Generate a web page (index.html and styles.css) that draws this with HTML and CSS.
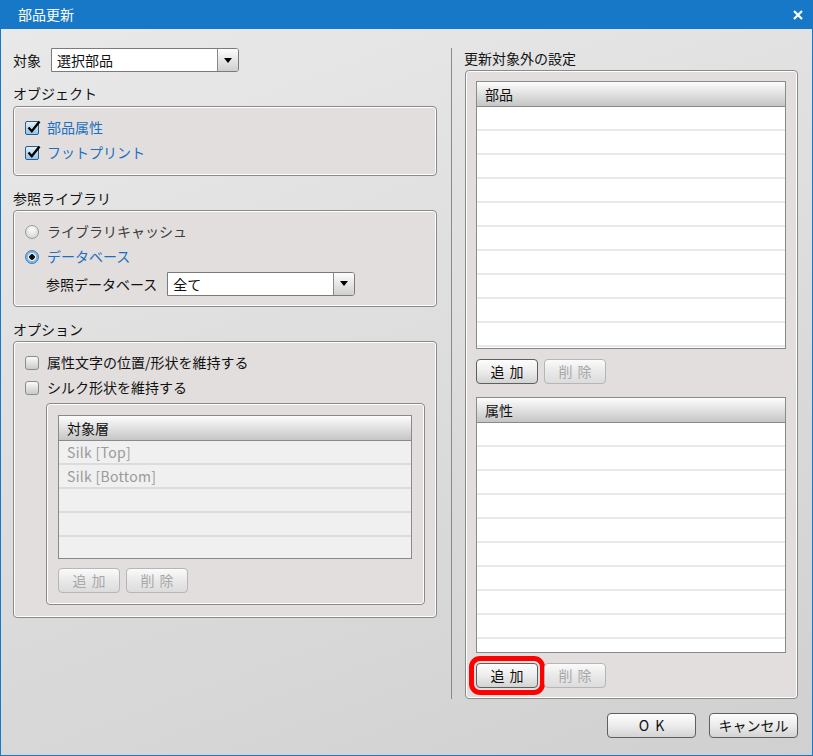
FILE: index.html
```html
<!DOCTYPE html>
<html lang="ja">
<head>
	<meta charset="UTF-8">
	<title>部品更新</title>
	<link rel="stylesheet" href="styles.css">
</head>
<body>
	<div class="window">
		<!-- タイトルバー -->
		<div class="titlebar">
			<span class="title">部品更新</span>
			<svg class="close" viewBox="0 0 10 10"><path d="M1 1L9 9M9 1L1 9" stroke="#fff" stroke-width="2.2" fill="none"/></svg>
		</div>
		<div class="frame">
			<div class="main">
				<!-- 左側 -->
				<div class="left">
					<div class="target-row">
						<span>対象</span>
						<div class="select"><span class="value">選択部品</span><span class="arrow"></span></div>
					</div>

					<div class="section-label first">オブジェクト</div>
					<div class="group">
						<div class="row">
							<span class="check on"><svg viewBox="0 0 14 14"><path d="M2.5 6.5L5.8 10.2L13.5 0.5" stroke="#000" stroke-width="2.4" fill="none"/></svg></span>
							<span class="blue">部品属性</span>
						</div>
						<div class="row">
							<span class="check on"><svg viewBox="0 0 14 14"><path d="M2.5 6.5L5.8 10.2L13.5 0.5" stroke="#000" stroke-width="2.4" fill="none"/></svg></span>
							<span class="blue">フットプリント</span>
						</div>
					</div>

					<div class="section-label">参照ライブラリ</div>
					<div class="group">
						<div class="row">
							<span class="radio"></span>
							<span class="dim">ライブラリキャッシュ</span>
						</div>
						<div class="row">
							<span class="radio on"></span>
							<span class="blue">データベース</span>
						</div>
						<div class="db-row">
							<span>参照データベース</span>
							<div class="select"><span class="value">全て</span><span class="arrow"></span></div>
						</div>
					</div>

					<div class="section-label">オプション</div>
					<div class="group options">
						<div class="row">
							<span class="check"></span>
							<span>属性文字の位置/形状を維持する</span>
						</div>
						<div class="row">
							<span class="check"></span>
							<span>シルク形状を維持する</span>
						</div>
						<div class="subgroup">
							<div class="table gray layers">
								<div class="head">対象層</div>
								<div class="body">
									<div class="cell">Silk [Top]</div>
									<div class="cell">Silk [Bottom]</div>
								</div>
							</div>
							<div class="btns">
								<div class="btn off">追加</div>
								<div class="btn off">削除</div>
							</div>
						</div>
					</div>
				</div>

				<div class="divider"></div>

				<!-- 右側 -->
				<div class="right">
					<div class="section-label side-label">更新対象外の設定</div>
					<div class="group side">
						<div class="table parts">
							<div class="head">部品</div>
							<div class="body"></div>
						</div>
						<div class="btns">
							<div class="btn">追加</div>
							<div class="btn off">削除</div>
						</div>
						<div class="table attrs">
							<div class="head">属性</div>
							<div class="body"></div>
						</div>
						<div class="btns">
							<div class="btn marked">追加</div>
							<div class="btn off">削除</div>
						</div>
					</div>
				</div>
			</div>

			<div class="footer">
				<div class="btn wide ok">OK</div>
				<div class="btn wide">キャンセル</div>
			</div>
		</div>
	</div>
</body>
</html>
```

FILE: styles.css
```css
*{margin:0;padding:0;box-sizing:border-box;}
body{width:813px;height:756px;font-family:"Noto Sans CJK JP","Noto Sans",sans-serif;font-size:14px;color:#111;background:#fff;}
.window{width:813px;height:756px;display:flex;flex-direction:column;}

/* タイトルバー */
.titlebar{height:29px;flex:none;background:#1878c8;color:#fff;display:flex;align-items:center;justify-content:space-between;padding:0 10px 0 18px;}
.titlebar .title{line-height:29px;}
.close{width:10px;height:10px;}

.frame{flex:1;border:1px solid #1878c8;border-top:none;background:linear-gradient(160deg,#e9e9e9,#d0d0d0);padding:19px 14px 0 12px;display:flex;flex-direction:column;}
.main{display:flex;}
.left{width:424px;}
.divider{width:1px;background:#8a8a8a;margin:0 12px 0 14px;}
.right{flex:1;}

.section-label{height:20px;line-height:20px;margin:12px 0 2px;}
.section-label.first{margin-top:11px;margin-bottom:3px;}
.section-label.side-label{margin-top:0;}

.target-row{display:flex;align-items:center;gap:10px;height:24px;}

/* セレクト */
.select{width:188px;height:24px;border:1px solid #7b7b7b;border-radius:0 3px 3px 0;background:#fff;display:flex;}
.select .value{flex:1;padding-left:5px;line-height:22px;}
.select .arrow{width:21px;border-left:1px solid #8a8a8a;border-radius:0 2px 2px 0;background:linear-gradient(#fdfdfd,#cfcfcf);display:flex;align-items:center;justify-content:center;}
.select .arrow::after{content:"";border-left:4px solid transparent;border-right:4px solid transparent;border-top:5px solid #000;}

/* グループ枠 */
.group{background:#e1dedd;border:1px solid #8a8a8a;border-radius:4px;box-shadow:inset 0 0 0 1px #fff;padding:8px 11px 10px;}
.group.options{padding-bottom:12px;}
.row{height:25px;display:flex;align-items:center;gap:8px;}
.row span:last-child{margin-top:-2px;}
.blue{color:#1c70bf;}
.dim{color:#3c3c3c;}

.check{width:14px;height:14px;flex:none;border:1px solid #8c8c8c;border-radius:3px;background:linear-gradient(#fbfbfb,#c9c9c9);position:relative;}
.check.on{border-color:#245f92;border-radius:2px;background:linear-gradient(#e4f0fa,#98c3e6);}
.check svg{position:absolute;left:0;top:-1px;width:14px;height:14px;overflow:visible;}

.radio{width:14px;height:14px;flex:none;border-radius:50%;border:1px solid #9a9a9a;background:radial-gradient(circle at 50% 30%,#fdfdfd,#cdcdcd);}
.radio.on{border-color:#3e80b8;background:radial-gradient(circle,#111 0 2.5px,#e3eef8 3px 3.8px,#86b6df 4.5px);}

.db-row{display:flex;align-items:center;gap:10px;height:25px;margin-top:2px;padding-left:21px;}

.subgroup{margin:3px 0 0 21px;background:#e1dedd;border:1px solid #8a8a8a;border-radius:4px;box-shadow:inset 0 0 0 1px #fff;padding:11px 12px 11px 11px;}

/* 表 */
.table{border:1px solid #8a8a8a;background:#fff;display:flex;flex-direction:column;overflow:hidden;}
.table .head{height:25px;flex:none;line-height:24px;padding-left:8px;background:linear-gradient(#fdfdfd,#c5c5c5);border-bottom:1px solid #8a8a8a;}
.table .body{flex:1;background:repeating-linear-gradient(#fff 0 22px,#e9e9e9 22px 24px);}
.table.gray .body{background:repeating-linear-gradient(#f0f0f0 0 22px,#dcdcdc 22px 24px);}
.table .cell{height:24px;line-height:22px;padding-left:8px;color:#9a9a9a;letter-spacing:0.3px;}
.layers{height:144px;}
.parts{height:268px;}
.attrs{height:256px;margin-top:13px;}
.group.side{margin-left:1px;padding:10px 11px 10px 10px;}

/* ボタン */
.btns{display:flex;gap:6px;margin-top:10px;}
.subgroup .btns{margin-top:9px;}
.btn{width:62px;height:25px;border:1px solid #5f5f5f;border-radius:4px;background:linear-gradient(#fdfdfd,#ececec 50%,#d3d3d3);line-height:23px;text-align:center;color:#111;letter-spacing:5px;text-indent:5px;}
.btn.off{border-color:#b6b6b6;color:#a8a8a8;background:linear-gradient(#fbfbfb,#e9e9e9 50%,#dcdcdc);}
.btn.marked{outline:5px solid #f00;outline-offset:2px;}
.btn.wide{width:89px;letter-spacing:0;text-indent:0;}
.btn.ok{letter-spacing:6px;text-indent:6px;}

.footer{display:flex;justify-content:flex-end;gap:13px;margin-top:14px;}
```
